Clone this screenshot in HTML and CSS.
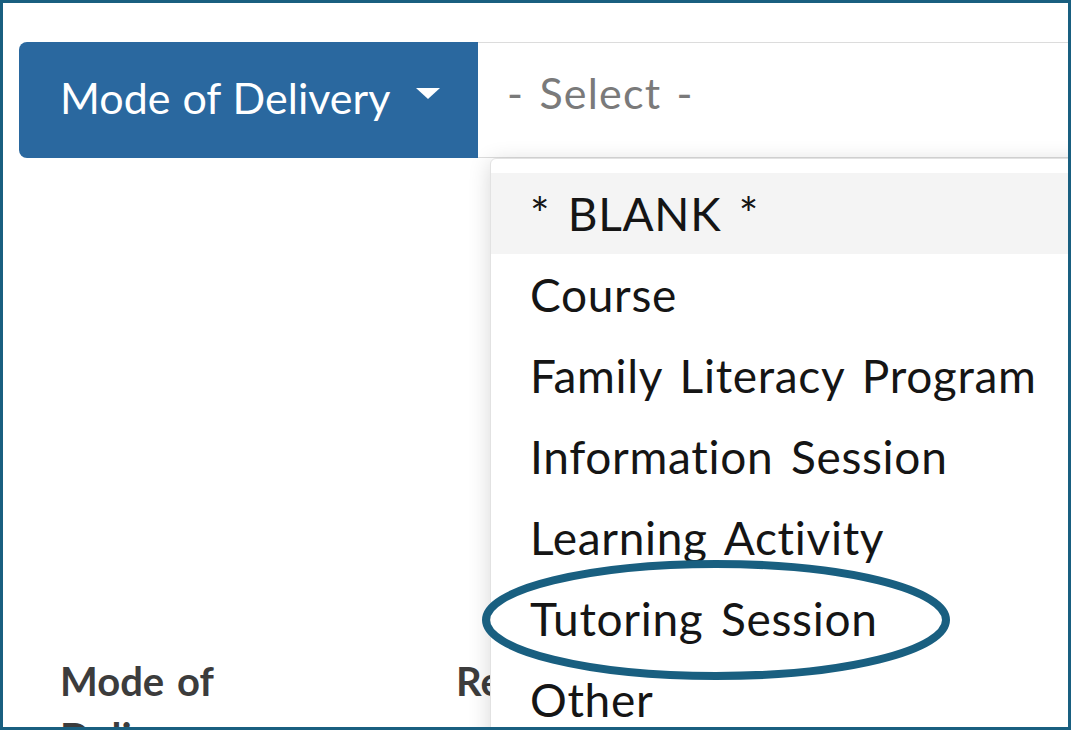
FILE: index.html
```html
<!DOCTYPE html>
<html lang="en">
<head>
  <meta charset="UTF-8" />
  <meta name="viewport" content="width=device-width, initial-scale=1.0" />
  <title>Mode of Delivery</title>
  <link rel="stylesheet" href="styles.css">
</head>
<body>

  <div class="frame">

    <div class="field">
      <div class="input-group">
        <button class="addon">Mode of Delivery <span class="caret"></span></button>
        <div class="select">- Select -</div>
      </div>

      <!-- lista desplegable abierta -->
      <ul class="menu">
        <li class="active">* BLANK *</li>
        <li>Course</li>
        <li>Family Literacy Program</li>
        <li>Information Session</li>
        <li>Learning Activity</li>
        <li>Tutoring Session</li>
        <li>Other</li>
      </ul>
    </div>

    <div class="labels">
      <div class="col">Mode of Delivery</div>
      <div class="col">Reason</div>
    </div>

    <svg class="mark" width="480" height="132" viewBox="0 0 480 132">
      <ellipse cx="238" cy="64" rx="230" ry="56" fill="none" stroke="#195f80" stroke-width="8" />
    </svg>

  </div>

</body>
</html>
```

FILE: styles.css
```css
* {
  box-sizing: border-box;
  margin: 0;
  padding: 0;
}

body {
  font-family: 'Lato', 'Open Sans', sans-serif;
  background: #fff;
  color: #1e1e1e;
}

.frame {
  position: relative;
  width: 1071px;
  height: 730px;
  border: 3px solid #195f80;
  overflow: hidden;
  padding: 39px 0 0 16px;
}

.field {
  position: relative;
  z-index: 2;
}

.input-group {
  display: flex;
  height: 116px;
}

.addon {
  width: 459px;
  flex-shrink: 0;
  display: flex;
  align-items: center;
  padding: 0 0 5px 41px;
  background: #2a689f;
  color: #fff;
  border: none;
  border-radius: 8px 0 0 8px;
  font-family: inherit;
  font-size: 43px;
  word-spacing: 1px;
  text-align: left;
}

.caret {
  display: inline-block;
  margin-left: 26px;
  margin-top: -8px;
  border-top: 11px solid #fff;
  border-left: 12px solid transparent;
  border-right: 12px solid transparent;
}

.select {
  flex: 1;
  display: flex;
  align-items: center;
  padding: 0 0 16px 29px;
  border-top: 1px solid #dcdcdc;
  border-bottom: 1px solid #dcdcdc;
  color: #7a7a7a;
  font-size: 43px;
  letter-spacing: 1.2px;
  word-spacing: 3px;
  min-width: 700px;
}

.menu {
  position: absolute;
  top: 116px;
  left: 471px;
  width: 720px;
  height: 700px;
  list-style: none;
  background: #fff;
  border: 1px solid #e2e2e2;
  border-radius: 6px 0 0 0;
  box-shadow: 0 4px 22px rgba(0, 0, 0, 0.16);
  padding-top: 14px;
}

.menu li {
  height: 81px;
  line-height: 81px;
  padding-left: 39px;
  font-size: 46px;
  letter-spacing: 0.7px;
  word-spacing: 5px;
  color: #151515;
}

.menu li.active {
  background: #f4f4f4;
}

.labels {
  display: grid;
  grid-template-columns: 396px 1fr;
  padding-left: 41px;
  margin-top: 495px;
}

.labels .col {
  font-size: 40px;
  font-weight: bold;
  line-height: 56px;
  word-spacing: 3px;
  color: #3c3c3c;
  width: 200px;
}

.mark {
  position: absolute;
  left: 475px;
  top: 553px;
  z-index: 3;
}
```
